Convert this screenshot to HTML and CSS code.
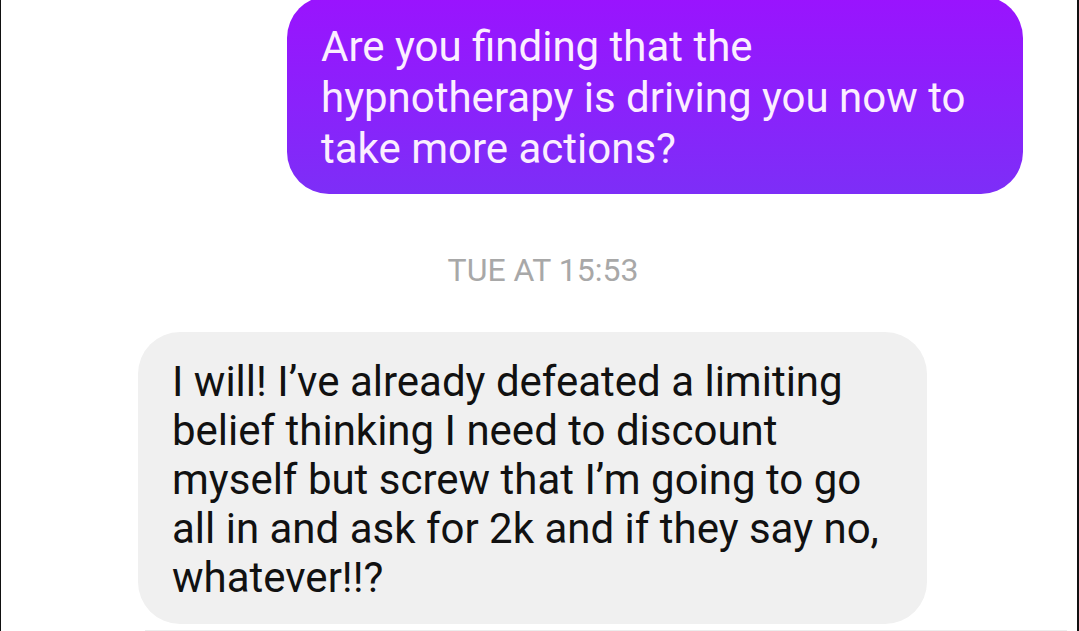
FILE: index.html
```html
<!DOCTYPE html>
<html lang="en">

<head>
    <meta charset="UTF-8">
    <meta name="viewport" content="width=device-width, initial-scale=1.0">
    <title>Chat</title>
    <link rel="stylesheet" href="styles.css">
</head>

<body>
    <div class="chat-wrap">
        <section class="msg-row msg-row-out">
            <div class="bubble bubble-out">
                Are you finding that the hypnotherapy is driving you now to take more actions?
            </div>
        </section>

        <section class="time-stamp">TUE AT 15:53</section>

        <section class="msg-row msg-row-in">
            <div class="bubble bubble-in">
                I will! I’ve already defeated a limiting belief thinking I need to discount myself but screw that I’m going to go all in and ask for 2k and if they say no, whatever!!?
            </div>
        </section>

        <div class="next-edge"></div>
    </div>
</body>

</html>
```
FILE: styles.css
```css
html,
body {
    padding: 0;
    margin: 0;

    height: 100%;
    width: 100%;
    overflow: hidden;
}

body {
    background-color: #ffffff;
    font-family: Roboto, "Liberation Sans", sans-serif;
}

.chat-wrap {
    height: 100%;
    box-sizing: border-box;

    display: flex;
    flex-direction: column;

    border-left: 1px solid #111111;
    border-right: 2px solid #111111;
}

.msg-row {
    display: flex;
}

.msg-row-out {
    justify-content: flex-end;
    padding-right: 54px;
    margin-top: -4px;
}

.msg-row-in {
    justify-content: flex-start;
    padding-left: 137px;
}

.bubble {
    box-sizing: border-box;
    border-radius: 42px;
}

.bubble-out {
    width: 736px;
    padding: 25px 34px 20px;

    background: linear-gradient(180deg, #9a13fe 0%, #8a22fb 55%, #7d2ef7 100%);
    color: #fbeeff;

    font-size: 42px;
    line-height: 51px;
}

.time-stamp {
    padding: 55px 0 41px;
    padding-left: 8px;

    text-align: center;
    color: #a8a8a8;
    font-size: 32px;
    line-height: 42px;
}

.bubble-in {
    width: 789px;
    padding: 25px 34px 22px;

    background-color: #f0f0f0;
    color: #111111;

    font-size: 42px;
    line-height: 49px;
}

.next-edge {
    margin-top: 6px;
    margin-left: 144px;
    margin-right: 10px;
    border-top: 1px solid #ececec;
}
```
